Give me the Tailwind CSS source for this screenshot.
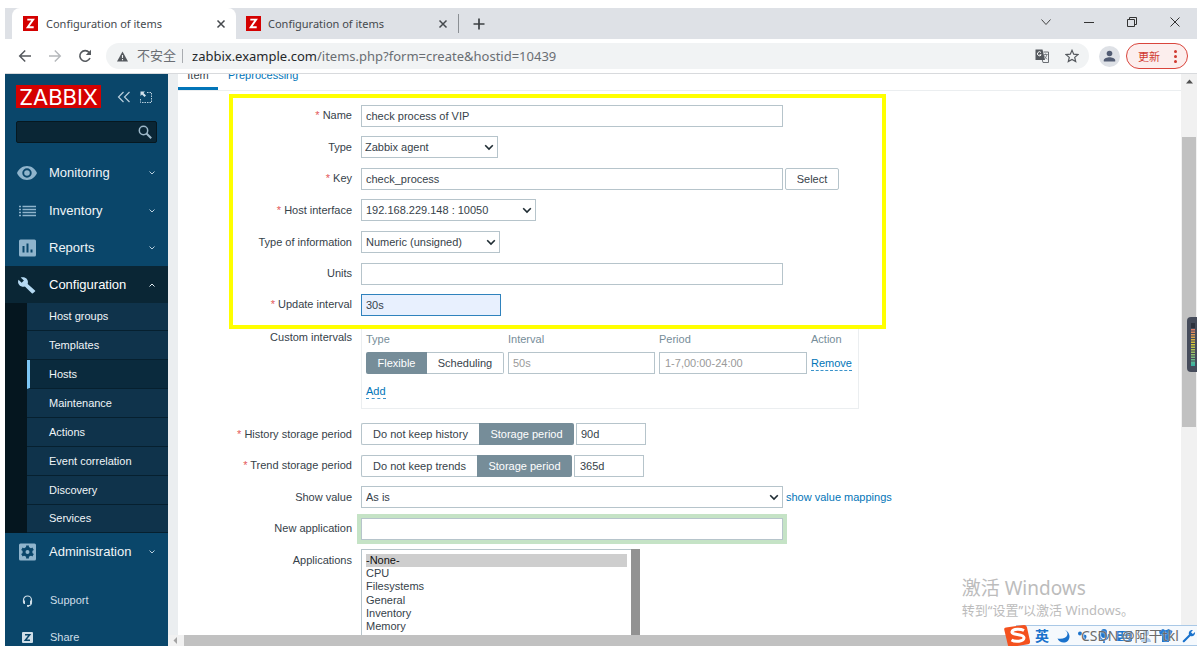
<!DOCTYPE html>
<html lang="zh-CN">
<head>
<meta charset="utf-8">
<title>Configuration of items</title>
<script src="https://cdn.jsdelivr.net/npm/@tailwindcss/browser@4"></script>
</head>
<body class="bg-white">
<div class="flex h-screen flex-col overflow-hidden py-2 pl-[5px] font-['Liberation_Sans',sans-serif] text-[11px] text-[#36424a]">

  <!-- Tab strip -->
  <header class="flex h-[31px] shrink-0 items-stretch bg-[#dee1e6] pl-[7px] font-['Noto_Sans',sans-serif] text-[#45494d]">
    <div class="flex w-[224px] items-center rounded-t-lg bg-white pr-[10px] pl-[11px]">
      <svg class="size-[15px]" viewBox="0 0 15 15"><rect width="15" height="15" fill="#d40000"/><path d="M4.300 3.600h5.800L4.700 11.300h6" fill="none" stroke="#fff" stroke-width="1.900"/></svg>
      <span class="ml-2 flex-1 pt-[2px] text-[11px]">Configuration of items</span>
      <button aria-label="Close tab" class="size-[10px]"><svg viewBox="0 0 10 10"><path d="M1.500 1.500l7 7M8.500 1.500l-7 7" stroke="#45494d" stroke-width="1.500"/></svg></button>
    </div>
    <div class="flex w-[222px] items-center border-r border-transparent pr-[9px] pl-[10px]">
      <svg class="size-[15px]" viewBox="0 0 15 15"><rect width="15" height="15" fill="#d40000"/><path d="M4.300 3.600h5.800L4.700 11.300h6" fill="none" stroke="#fff" stroke-width="1.900"/></svg>
      <span class="ml-[7px] flex-1 pt-[2px] text-[11px]">Configuration of items</span>
      <button aria-label="Close tab" class="size-[10px]"><svg viewBox="0 0 10 10"><path d="M1.500 1.500l7 7M8.500 1.500l-7 7" stroke="#45494d" stroke-width="1.500"/></svg></button>
    </div>
    <div class="my-auto h-[19px] w-px bg-[#8b8f94]"></div>
    <button aria-label="New tab" class="ml-[14px] w-3"><svg viewBox="0 0 12 12"><path d="M6 .5v11M.5 6h11" stroke="#3c4043" stroke-width="1.700"/></svg></button>
    <div class="ml-auto flex h-[27px] items-center gap-[31px] pr-4">
      <button aria-label="Tab search" class="size-3"><svg viewBox="0 0 12 12"><path d="M1.500 3.500L6 8.500l4.500-5" fill="none" stroke="#444" stroke-width="1"/></svg></button>
      <button aria-label="Minimize" class="size-3"><svg viewBox="0 0 12 12"><path d="M1 6.500h10" stroke="#333" stroke-width="1"/></svg></button>
      <button aria-label="Restore" class="size-3"><svg viewBox="0 0 12 12"><path d="M1.500 3.500h7v7h-7zM3.500 3V1.500h7v7H9" fill="none" stroke="#333" stroke-width="1"/></svg></button>
      <button aria-label="Close" class="size-3"><svg viewBox="0 0 12 12"><path d="M1.500 1.500l9 9M10.500 1.500l-9 9" stroke="#333" stroke-width="1"/></svg></button>
    </div>
  </header>

  <!-- Toolbar -->
  <div class="flex h-[35px] shrink-0 items-center border-b border-[#d8dadd] pr-[9px] pl-[13px]">
    <button aria-label="Back" class="size-[14px]"><svg viewBox="0 0 14 14"><path d="M13 7H2M7.200 1.500L1.700 7l5.500 5.500" fill="none" stroke="#55595e" stroke-width="1.500"/></svg></button>
    <button aria-label="Forward" class="ml-4 size-[14px]"><svg viewBox="0 0 14 14"><path d="M1 7h11M6.800 1.500L12.300 7l-5.500 5.500" fill="none" stroke="#b5b8bb" stroke-width="1.400"/></svg></button>
    <button aria-label="Reload" class="ml-4 size-[14px]"><svg viewBox="0 0 14 14"><path d="M12 9A5.300 5.300 0 1 1 11.200 3.500" fill="none" stroke="#55595e" stroke-width="1.600"/><path d="M13 .8v5.200H7.800z" fill="#55595e"/></svg></button>
    <div class="ml-[14px] flex h-[26px] flex-1 items-center rounded-full bg-[#f1f3f4] pr-[10px] pl-[11px] font-['Noto_Sans','Noto_Sans_CJK_SC',sans-serif] text-[13px] text-[#6a6e73]">
      <svg class="size-[11px]" viewBox="0 0 11 11"><path d="M5.500 .5L11 10.500H0z" fill="#55595e"/><path d="M5.500 4v3M5.500 8v1.200" stroke="#f1f3f4" stroke-width="1.100"/></svg>
      <span class="ml-[9px]">不安全</span>
      <span class="ml-[6px] h-[14px] w-px bg-[#a9acb0]"></span>
      <span class="ml-[9px] flex-1 pt-[2px]"><span class="text-[#25282b]">zabbix.example.com</span>/items.php?form=create&amp;hostid=10439</span>
      <button aria-label="Translate" class="size-[14px]"><svg viewBox="0 0 14 14"><path d="M.5 .5h7L10 11H.5z" fill="#55595e"/><path d="M6 3.500A2 2 0 1 0 6.200 5.800H4.500" fill="none" stroke="#fff" stroke-width="1"/><path d="M8.500 3h5v10.500H8L7.300 11" fill="none" stroke="#6a6e73" stroke-width="1"/><path d="M8.700 5.500h4M10.600 4.500v1M12 5.500c-.5 2-1.500 3.500-2.500 4.500M9.300 6.500c.5 1.500 1.500 2.800 3 3.700" fill="none" stroke="#6a6e73" stroke-width=".8"/></svg></button>
      <button aria-label="Bookmark" class="ml-4 size-[14px]"><svg viewBox="0 0 14 14"><path d="M7 1.300l1.700 3.900 4.200.4-3.200 2.800 1 4.200L7 10.400l-3.700 2.200 1-4.200L1.100 5.600l4.200-.4z" fill="none" stroke="#55595e" stroke-width="1.200"/></svg></button>
    </div>
    <svg class="ml-[10px] size-[21px]" viewBox="0 0 21 21"><circle cx="10.500" cy="10.500" r="10.500" fill="#dee1e6"/><circle cx="10.500" cy="7.500" r="2.800" fill="#525c73"/><path d="M4.800 15.500v-1.300c0-2 3.500-3 5.700-3s5.700 1 5.700 3v1.300z" fill="#525c73"/></svg>
    <button class="ml-[6px] flex h-[26px] w-[62px] items-center justify-between rounded-full border border-[#d9453c] bg-[#fceeed] pr-[10px] pl-[11px] font-['Noto_Sans_CJK_SC',sans-serif] text-[11px] text-[#d03a30]">更新<svg class="h-[13px] w-[3px]" viewBox="0 0 3 13"><g fill="#d03a30"><circle cx="1.500" cy="1.500" r="1.500"/><circle cx="1.500" cy="6.500" r="1.500"/><circle cx="1.500" cy="11.500" r="1.500"/></g></svg></button>
  </div>

  <div class="relative flex min-h-0 flex-1">
    <!-- Sidebar -->
    <aside class="w-[163px] shrink-0 overflow-hidden bg-[#0a466a] text-[#f0f5f8]">
      <div class="flex items-center px-[11px] pt-[11px]">
        <a href="#" class="flex h-[23px] w-[85px] items-center justify-center bg-[#d40000] font-['Inter',sans-serif] text-[22px] leading-none text-white">ZABBIX</a>
        <button aria-label="Collapse menu" class="ml-4 w-[14px]"><svg viewBox="0 0 14 12"><path d="M6.500 1L1.500 6l5 5M12.500 1l-5 5 5 5" fill="none" stroke="#b9cfdd" stroke-width="1.200"/></svg></button>
        <button aria-label="Hide menu" class="ml-[9px] w-3"><svg viewBox="0 0 12 12"><path d="M7 1.500h4.500v10H.5V7" fill="none" stroke="#b9cfdd" stroke-width="1" stroke-dasharray="1.500 1"/><path d="M.5 .5h4.500L3.500 2l2.500 2.500-1.500 1.500L2 3.500.500 5z" fill="#d3e2ec"/></svg></button>
      </div>
      <div class="mx-[11px] mt-[13px] flex h-[22px] items-center rounded-xs border border-[#061820] bg-[#0a2635] pr-1">
        <input aria-label="Search" class="min-w-0 flex-1 px-1 outline-none">
        <svg class="size-[14px]" viewBox="0 0 14 14"><circle cx="5.500" cy="5.500" r="4.200" fill="none" stroke="#9db8c9" stroke-width="1.500"/><path d="M8.500 8.500l4.700 4.700" stroke="#9db8c9" stroke-width="2"/></svg>
      </div>
      <nav class="mt-3">
        <a href="#" class="flex h-[37px] items-center pr-3 pb-px pl-3 text-[13px]">
          <svg class="w-5" viewBox="0 0 20 14"><path d="M10 0C5.500 0 1.700 2.800 0 7c1.700 4.200 5.500 7 10 7s8.300-2.800 10-7c-1.700-4.200-5.500-7-10-7zm0 11.700A4.700 4.700 0 1 1 10 2.300a4.700 4.700 0 0 1 0 9.400zm0-7.500a2.800 2.800 0 1 0 0 5.600 2.800 2.800 0 0 0 0-5.600z" fill="#8fb4cc"/></svg>
          <span class="ml-3 flex-1">Monitoring</span>
          <svg class="w-2" viewBox="0 0 8 6"><path d="M1.500 1.500L4 4l2.500-2.500" fill="none" stroke="#b9cfdd"/></svg></a>
        <a href="#" class="flex h-[37px] items-center pr-3 pl-3 text-[13px]">
          <svg class="w-5" viewBox="0 0 20 12"><path d="M2 1.500h2M2 4.500h2M2 7.500h2M2 10.500h2M5.500 1.500H19M5.500 4.500H19M5.500 7.500H19M5.500 10.500H19" stroke="#8fb4cc" stroke-width="1.500"/></svg>
          <span class="ml-3 flex-1">Inventory</span>
          <svg class="w-2" viewBox="0 0 8 6"><path d="M1.500 1.500L4 4l2.500-2.500" fill="none" stroke="#b9cfdd"/></svg></a>
        <a href="#" class="flex h-[37px] items-center pr-3 pl-3 text-[13px]">
          <svg class="w-5" viewBox="0 0 20 18"><rect x="2" y=".5" width="17" height="17" rx="1.500" fill="#8fb4cc"/><path d="M6.500 7v6.500M10.500 4.500v9M14.500 10.500v3" stroke="#0a466a" stroke-width="2"/></svg>
          <span class="ml-3 flex-1">Reports</span>
          <svg class="w-2" viewBox="0 0 8 6"><path d="M1.500 1.500L4 4l2.500-2.500" fill="none" stroke="#b9cfdd"/></svg></a>
        <a href="#" class="flex h-[37px] items-center bg-[#0a2635] pr-3 pl-3 text-[13px] text-white">
          <svg class="w-5" viewBox="0 0 20 18"><path d="M18 14.500L10.700 8c.6-1.900.2-4-1.300-5.400C7.800 1.100 5.500.8 3.700 1.500l3.200 3.100-2.200 2.200L1.500 3.700c-.9 1.900-.5 4.100 1 5.600 1.500 1.400 3.600 1.800 5.400 1.200l6.900 6.700c.3.300.8.300 1.100 0l2.100-1.700c.4-.2.400-.7 0-1z" fill="#b5d9f2"/></svg>
          <span class="ml-3 flex-1">Configuration</span>
          <svg class="w-2" viewBox="0 0 8 6"><path d="M1.500 4.500L4 2l2.500 2.500" fill="none" stroke="#e6eff5"/></svg></a>
        <div class="bg-[#05161f] pl-[22px]">
          <div class="flex flex-col bg-[#0f334b] text-[#f0f5f8]">
            <a href="#" class="flex h-[28px] items-center border-b border-[#06202f] pl-[22px]">Host groups</a>
            <a href="#" class="flex h-[29px] items-center border-b border-[#06202f] pl-[22px]">Templates</a>
            <a href="#" class="flex h-[29px] items-center border-b border-l-3 border-b-[#06202f] border-l-[#7cc6f5] bg-[#0a2a3d] pl-[19px]">Hosts</a>
            <a href="#" class="flex h-[29px] items-center border-b border-[#06202f] pl-[22px]">Maintenance</a>
            <a href="#" class="flex h-[29px] items-center border-b border-[#06202f] pl-[22px]">Actions</a>
            <a href="#" class="flex h-[29px] items-center border-b border-[#06202f] pl-[22px]">Event correlation</a>
            <a href="#" class="flex h-[29px] items-center border-b border-[#06202f] pl-[22px]">Discovery</a>
            <a href="#" class="flex h-[28px] items-center border-b border-[#06202f] pl-[22px]">Services</a>
          </div>
        </div>
        <a href="#" class="flex h-[37px] items-center pr-3 pl-3 text-[13px]">
          <svg class="w-5" viewBox="0 0 20 18"><rect x="2" y=".5" width="17" height="17" rx="1.500" fill="#8fb4cc"/><circle cx="10.500" cy="9" r="3.500" fill="none" stroke="#0a466a" stroke-width="3"/><path d="M10.500 2.500v3M10.500 12.500v3M4.900 5.700l2.500 1.500M13.600 10.800l2.500 1.500M4.900 12.300l2.500-1.500M13.600 7.200l2.500-1.500" stroke="#0a466a" stroke-width="2.800"/></svg>
          <span class="ml-3 flex-1">Administration</span>
          <svg class="w-2" viewBox="0 0 8 6"><path d="M1.500 1.500L4 4l2.500-2.500" fill="none" stroke="#b9cfdd"/></svg></a>
        <a href="#" class="mt-3 flex h-[37px] items-center pl-[17px] text-[#cfdee8]">
          <svg class="w-[11px]" viewBox="0 0 11 12"><path d="M1.500 7V5a4 4 0 0 1 8 0v2c0 2-1 3.800-3.500 3.800" fill="none" stroke="#cfdee8" stroke-width="1.200"/><path d="M1 5.500h2v3.500H2L1 8zM8 5.500h2V8L9 9H8zM5 10h2v1.800H5z" fill="#cfdee8"/></svg>
          <span class="ml-[17px]">Support</span></a>
        <a href="#" class="flex h-[37px] items-center pl-[17px] text-[#cfdee8]">
          <svg class="w-[11px]" viewBox="0 0 11 11"><rect width="11" height="11" rx="1" fill="#cfdee8"/><path d="M3 2.800h4.700L3.300 8.200H8" fill="none" stroke="#0a466a" stroke-width="1.500"/></svg>
          <span class="ml-[17px]">Share</span></a>
      </nav>
    </aside>

    <div class="flex min-w-0 flex-1 flex-col">
      <div class="flex min-h-0 flex-1 bg-[#ebeef0] pl-[10px]">
        <!-- Item form -->
        <main class="relative min-w-0 flex-1 overflow-hidden bg-white">
          <nav class="flex h-[17px] items-end overflow-hidden border-b border-[#ebeef0]">
            <a href="#" class="w-10 border-b-3 border-[#0275b8] pb-1 text-center leading-[16px]">Item</a>
            <a href="#" class="border-b-3 border-transparent px-[10px] pb-1 leading-[16px] text-[#0275b8]">Preprocessing</a>
          </nav>

          <form class="mt-[14px] flex flex-col gap-[10px]">
            <div class="grid grid-cols-[174px_1fr] items-center gap-x-[9px]">
              <label for="name" class="text-right"><span class="text-[#e45959]">*</span> Name</label>
              <input id="name" value="check process of VIP" class="-mb-px h-[22px] w-[422px] border border-[#b6c4cb] px-1 outline-none">
            </div>
            <div class="grid grid-cols-[174px_1fr] items-center gap-x-[9px]">
              <label for="type" class="text-right">Type</label>
              <div class="grid h-[22px] w-[137px] items-center border border-[#b6c4cb]">
                <select id="type" class="col-start-1 row-start-1 h-full appearance-none px-[3px] outline-none"><option>Zabbix agent</option></select>
                <svg class="pointer-events-none col-start-1 row-start-1 mr-[3px] w-[10px] justify-self-end" viewBox="0 0 10 7"><path d="M1.200 1.200L5 5l3.800-3.800" fill="none" stroke="#1f2c33" stroke-width="1.600"/></svg>
              </div>
            </div>
            <div class="grid grid-cols-[174px_1fr] items-center gap-x-[9px]">
              <label for="key" class="text-right"><span class="text-[#e45959]">*</span> Key</label>
              <div class="-mb-px flex gap-[2px]">
                <input id="key" value="check_process" class="h-[22px] w-[422px] border border-[#b6c4cb] px-1 outline-none">
                <button type="button" class="h-[22px] w-[54px] rounded-xs border border-[#b6c4cb]">Select</button>
              </div>
            </div>
            <div class="grid grid-cols-[174px_1fr] items-center gap-x-[9px]">
              <label for="iface" class="text-right"><span class="text-[#e45959]">*</span> Host interface</label>
              <div class="grid h-[22px] w-[175px] items-center border border-[#b6c4cb]">
                <select id="iface" class="col-start-1 row-start-1 h-full appearance-none px-1 outline-none"><option>192.168.229.148 : 10050</option></select>
                <svg class="pointer-events-none col-start-1 row-start-1 mr-[3px] w-[10px] justify-self-end" viewBox="0 0 10 7"><path d="M1.200 1.200L5 5l3.800-3.800" fill="none" stroke="#1f2c33" stroke-width="1.600"/></svg>
              </div>
            </div>
            <div class="grid grid-cols-[174px_1fr] items-center gap-x-[9px]">
              <label for="info" class="text-right">Type of information</label>
              <div class="grid h-[22px] w-[139px] items-center border border-[#b6c4cb]">
                <select id="info" class="col-start-1 row-start-1 h-full appearance-none px-1 outline-none"><option>Numeric (unsigned)</option></select>
                <svg class="pointer-events-none col-start-1 row-start-1 mr-[3px] w-[10px] justify-self-end" viewBox="0 0 10 7"><path d="M1.200 1.200L5 5l3.800-3.800" fill="none" stroke="#1f2c33" stroke-width="1.600"/></svg>
              </div>
            </div>
            <div class="grid grid-cols-[174px_1fr] items-center gap-x-[9px]">
              <label for="units" class="text-right">Units</label>
              <input id="units" class="-mb-px h-[22px] w-[422px] border border-[#b6c4cb] px-1 outline-none">
            </div>
            <div class="grid grid-cols-[174px_1fr] items-center gap-x-[9px]">
              <label for="interval" class="text-right"><span class="text-[#e45959]">*</span> Update interval</label>
              <input id="interval" value="30s" class="-mb-px h-[22px] w-[140px] border border-[#2f82bd] bg-[#e8f0fe] px-1 outline-none">
            </div>

            <div class="mb-1 grid grid-cols-[174px_1fr] gap-x-[9px]">
              <span id="custom" class="pt-1 text-right">Custom intervals</span>
              <div role="group" aria-labelledby="custom" class="h-[84px] w-[498px] border border-[#ebeef0] pt-[6px] pl-1">
                <table class="w-[488px] table-fixed text-left">
                  <thead><tr class="h-[20px] align-top leading-[14px] text-[#768d99]">
                    <th class="w-[142px] font-normal">Type</th><th class="w-[151px] font-normal">Interval</th><th class="w-[152px] font-normal">Period</th><th class="font-normal">Action</th>
                  </tr></thead>
                  <tbody><tr class="h-[22px]">
                    <td><div class="flex w-[138px]">
                      <button type="button" class="h-[22px] w-[61px] rounded-l-xs bg-[#768d99] text-white">Flexible</button>
                      <button type="button" class="h-[22px] flex-1 rounded-r-xs border border-l-0 border-[#b6c4cb]">Scheduling</button>
                    </div></td>
                    <td><input aria-label="Interval" placeholder="50s" class="block h-[22px] w-[147px] border border-[#b6c4cb] px-1 outline-none placeholder:text-[#9a9a9a]"></td>
                    <td><input aria-label="Period" placeholder="1-7,00:00-24:00" class="block h-[22px] w-[148px] border border-[#b6c4cb] px-[5px] outline-none placeholder:text-[#9a9a9a]"></td>
                    <td><a href="#" class="border-b border-dashed border-[#3b93ca] pb-px text-[#0275b8]">Remove</a></td>
                  </tr></tbody>
                </table>
                <a href="#" class="mt-[10px] inline-block border-b border-dashed border-[#3b93ca] leading-[14px] text-[#0275b8]">Add</a>
              </div>
            </div>

            <div class="grid grid-cols-[174px_1fr] items-center gap-x-[9px]">
              <label for="history" class="text-right"><span class="text-[#e45959]">*</span> History storage period</label>
              <div class="flex">
                <button type="button" class="h-[22px] w-[118px] rounded-l-xs border border-r-0 border-[#b6c4cb]">Do not keep history</button>
                <button type="button" class="h-[22px] w-[95px] rounded-r-xs bg-[#768d99] text-white">Storage period</button>
                <input id="history" value="90d" class="ml-[2px] h-[22px] w-[70px] border border-[#b6c4cb] px-1 outline-none">
              </div>
            </div>
            <div class="grid grid-cols-[174px_1fr] items-center gap-x-[9px]">
              <label for="trend" class="text-right"><span class="text-[#e45959]">*</span> Trend storage period</label>
              <div class="-mb-px flex">
                <button type="button" class="h-[22px] w-[116px] rounded-l-xs border border-r-0 border-[#b6c4cb]">Do not keep trends</button>
                <button type="button" class="h-[22px] w-[95px] rounded-r-xs bg-[#768d99] text-white">Storage period</button>
                <input id="trend" value="365d" class="ml-[2px] h-[22px] w-[70px] border border-[#b6c4cb] px-[5px] outline-none">
              </div>
            </div>
            <div class="grid grid-cols-[174px_1fr] items-center gap-x-[9px]">
              <label for="show" class="text-right">Show value</label>
              <div class="flex items-center gap-[3px]">
                <div class="grid h-[22px] w-[422px] items-center border border-[#b6c4cb]">
                  <select id="show" class="col-start-1 row-start-1 h-full appearance-none px-1 outline-none"><option>As is</option></select>
                  <svg class="pointer-events-none col-start-1 row-start-1 mr-[3px] w-[10px] justify-self-end" viewBox="0 0 10 7"><path d="M1.200 1.200L5 5l3.800-3.800" fill="none" stroke="#1f2c33" stroke-width="1.600"/></svg>
                </div>
                <a href="#" class="text-[#0275b8]">show value mappings</a>
              </div>
            </div>
            <div class="grid grid-cols-[174px_1fr] items-center gap-x-[9px]">
              <label for="newapp" class="text-right">New application</label>
              <input id="newapp" class="-mb-px h-[22px] w-[422px] border border-[#b6c4cb] px-1 ring-4 ring-[#c5e3c6] outline-none">
            </div>
            <div class="grid grid-cols-[174px_1fr] gap-x-[9px]">
              <label for="apps" class="pt-[3px] text-right">Applications</label>
              <div class="flex">
                <select id="apps" multiple class="h-[120px] w-[270px] overflow-hidden border border-r-0 border-[#b6c4cb] px-1 py-1 outline-none">
                  <option selected class="h-[13px] p-0">-None-</option><option class="h-[13px] p-0">CPU</option><option class="h-[13px] p-0">Filesystems</option><option class="h-[13px] p-0">General</option><option class="h-[13px] p-0">Inventory</option><option class="h-[13px] p-0">Memory</option>
                </select>
                <div class="w-[9px] bg-[#929292]"></div>
              </div>
            </div>
          </form>

          <!-- Highlight frame over the main fields -->
          <div class="pointer-events-none absolute top-5 left-[51px] h-[235px] w-[657px] border-4 border-[#ffff00]"></div>
          <!-- Windows activation notice -->
          <div class="pointer-events-none absolute right-[47px] bottom-[15px] font-['Noto_Sans','Noto_Sans_CJK_SC',sans-serif] text-[#bcbcbc]">
            <p class="text-[19px] leading-[24px]">激活 Windows</p>
            <p class="text-[13px] leading-[20px]">转到“设置”以激活 Windows。</p>
          </div>
        </main>
        <!-- Vertical scrollbar -->
        <div class="w-4 shrink-0 bg-[#f1f1f1] px-px">
          <svg class="mx-auto mt-[5px] w-[7px]" viewBox="0 0 7 5"><path d="M0 4.500L3.500 .5 7 4.500z" fill="#505050"/></svg>
          <div class="mt-[53px] h-[290px] bg-[#c1c1c1]"></div>
        </div>
      </div>
      <!-- Horizontal scrollbar -->
      <div class="flex h-[11px] shrink-0 items-center bg-[#f1f1f1] pl-[5px]">
        <svg class="w-1" viewBox="0 0 4 7"><path d="M4 0v7L.5 3.500z" fill="#a3a3a3"/></svg>
        <div class="mr-[150px] ml-[7px] h-full flex-1 bg-[#c1c1c1]"></div>
      </div>
    </div>

    <!-- Level meter docked on the right edge -->
    <div class="absolute top-[243px] right-0 flex h-[55px] w-[10px] items-center rounded-l-sm bg-[#454b5a] pl-1">
      <svg class="h-[43px] w-1" viewBox="0 0 4 43"><defs><linearGradient id="lv" x1="0" y1="0" x2="0" y2="1"><stop offset="0" stop-color="#e07a6a"/><stop offset=".4" stop-color="#d5c936"/><stop offset=".75" stop-color="#85c07a"/><stop offset="1" stop-color="#35b0a5"/></linearGradient></defs><rect width="4" height="5" fill="#2d323d"/><rect y="6" width="4" height="37" fill="url(#lv)"/><path d="M2 7.500v32" stroke="#454b5a" stroke-width="4" stroke-dasharray="1 1.500"/></svg>
    </div>

    <!-- Input method bar -->
    <div class="absolute right-0 bottom-0 flex h-[21px] w-[193px] items-center overflow-hidden">
      <div class="absolute inset-y-0 right-0 left-3 border border-r-0 border-[#a9c8e6] bg-[#f5f9fd]"></div>
      <svg class="absolute left-0 h-[21px] w-[27px]" viewBox="0 0 27 21"><path d="M2 2.500L20 0c2 0 2.500 1 3 2.500L26 16c.3 2-.5 3-2 3.300L7 22c-2 .2-2.800-.5-3.200-2.200L.3 5C0 3.500.5 2.800 2 2.500z" fill="#f4511e"/><path d="M20 5.500c-3-1.500-11-2-12 1.300C7 10.500 20 8.500 20 12.800c0 4-9 4.300-12.500 2.200" fill="none" stroke="#fff" stroke-width="3"/></svg>
      <span class="absolute left-[31px] font-['Noto_Sans_CJK_SC',sans-serif] text-[14px] leading-[21px] font-bold text-[#1a72cc]">英</span>
      <svg class="absolute left-[52px] h-[21px] w-[141px]" viewBox="0 0 141 21"><g fill="#1a72cc"><path d="M9 5c5 3 2.500 10-7.500 8.500C4 20 14 18.500 13.500 11 13.200 8 11.500 6 9 5z"/><circle cx="24" cy="8.500" r="2"/><path d="M28 9.500c3 0 3.500 3 .5 6l-1-1c1.500-1.500 1-2 0-3z"/><rect x="45" y="4" width="6" height="9" rx="3"/><path d="M42.500 9h1.500c0 7 8 7 8 0h1.500c0 5-3 6-4.700 6.500V18h-1.600v-2.500C45 15 42.500 14 42.500 9z"/><path d="M61 6h15v10H61zm1.500 1.500v1.800h3V7.500zm4.500 0v1.800h3V7.500zm4.500 0v1.800h3V7.500zm-9 3.500v1.500h3V11zm4.500 0v1.500h3V11zm4.500 0v1.500h3V11zm-7 3v1h8v-1z" fill-rule="evenodd"/><circle cx="90" cy="8" r="3" fill="#a9c8e8"/><path d="M85 17c0-6 10-6 10 0z" fill="#a9c8e8"/><path d="M103 6l4-2c1.500 1.500 4 1.500 5.500 0l4 2-1.500 4-2-.5V17h-7V9.500l-2 .5z"/><path d="M127 15.500l6-6c-.8-2.500 1-5 4-4.500l-2 2.200 1.800 1.800 2.200-2c.5 3-2 4.800-4.500 4l-6 6c-1 1-2.500-.5-1.500-1.500z"/></g></svg>
      <span class="absolute left-[77px] font-['Noto_Sans','Noto_Sans_CJK_SC',sans-serif] text-[14px] leading-[22px] whitespace-nowrap text-[#6a6a6a] text-shadow-[0_0_2px_#ffffff]">CSDN @阿干tkl</span>
    </div>
  </div>
</div>
</body>
</html>
